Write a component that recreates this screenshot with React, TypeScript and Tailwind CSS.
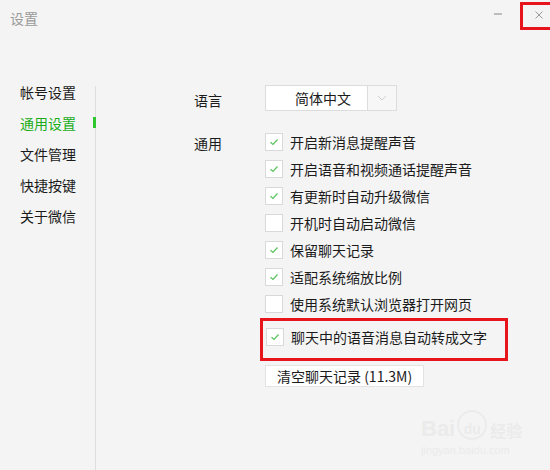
import React from 'react';

const font = { fontFamily: '"Noto Sans CJK SC", "Microsoft YaHei", "Liberation Sans", sans-serif' };

const navItems = ['帐号设置', '通用设置', '文件管理', '快捷按键', '关于微信'];

const options: { label: string; checked: boolean }[] = [
  { label: '开启新消息提醒声音', checked: true },
  { label: '开启语音和视频通话提醒声音', checked: true },
  { label: '有更新时自动升级微信', checked: true },
  { label: '开机时自动启动微信', checked: false },
  { label: '保留聊天记录', checked: true },
  { label: '适配系统缩放比例', checked: true },
  { label: '使用系统默认浏览器打开网页', checked: false },
];

function Checkbox({ checked }: { checked: boolean }) {
  return (
    <div className="w-[18px] h-[18px] border border-[#d9d9d9] bg-white flex items-center justify-center shrink-0">
      {checked && (
        <svg width="12" height="12" viewBox="0 0 12 12">
          <path d="M2.5 6.2 L5 8.5 L9.5 3.5" fill="none" stroke="#5ac25c" strokeWidth="1.2" />
        </svg>
      )}
    </div>
  );
}

export default function App() {
  return (
    <div className="relative w-[550px] h-[470px] bg-[#f4f4f4] overflow-hidden text-[#1b1b1b]" style={font}>
      {/* title bar */}
      <div className="flex items-start h-[77px]">
        <div className="ml-[10px] mt-[9px] text-[14px] leading-[18px] text-[#9a9a9a]">设置</div>
        <div className="ml-auto mt-[13px] mr-[18px] w-[8px] h-[2px] bg-[#bdbdbd]" />
        <div className="mt-[2px] w-[30px] h-[28px] border-[3px] border-r-0 border-[#e8141c] flex items-center justify-center pl-[4px] pb-[3px]">
          <svg width="8" height="8" viewBox="0 0 8 8">
            <path d="M0.5 0.5 L7.5 7.5 M7.5 0.5 L0.5 7.5" stroke="#9a9a9a" strokeWidth="1" />
          </svg>
        </div>
      </div>

      <div className="flex">
        {/* sidebar */}
        <div className="flex">
          <div className="w-[95px]">
            {navItems.map((item, i) => (
              <div
                key={item}
                className={`relative h-[31px] leading-[31px] pl-[20px] text-[14px] ${i === 1 ? 'text-[#1aad19]' : 'text-[#1b1b1b]'}`}
              >
                {item}
                {i === 1 && <div className="absolute right-[-1px] top-[9px] w-[3px] h-[11px] bg-[#2fc72f]" />}
              </div>
            ))}
          </div>
          <div className="w-px h-[384px] mt-[9px] bg-[#dedede]" />
        </div>

        {/* content */}
        <div className="pl-[98px] pt-[8px] text-[14px]">
          <div className="flex items-center">
            <div className="w-[71px] mt-[5px]">语言</div>
            <div className="flex h-[26px] w-[132px] border border-[#dcdcdc]">
              <div className="w-[101px] bg-white pl-[29px] leading-[24px]">简体中文</div>
              <div className="flex-1 border-l border-[#dcdcdc] bg-[#f7f7f7] flex items-center justify-center">
                <svg width="10" height="6" viewBox="0 0 10 6">
                  <path d="M1 1 L5 5 L9 1" fill="none" stroke="#cfcfcf" strokeWidth="1" />
                </svg>
              </div>
            </div>
          </div>

          <div className="flex mt-[17px]">
            <div className="w-[71px] leading-[27px] mt-[2px]">通用</div>
            <div>
              {options.map((o) => (
                <div key={o.label} className="flex items-center h-[27px]">
                  <Checkbox checked={o.checked} />
                  <span className="ml-[7px] leading-[18px]">{o.label}</span>
                </div>
              ))}
              <div className="-ml-[5px] mt-[1px] w-[248px] h-[43px] border-[3px] border-[#e8141c] flex items-center pl-[3px] pb-[6px]">
                <Checkbox checked />
                <span className="ml-[7px] leading-[18px]">聊天中的语音消息自动转成文字</span>
              </div>
              <div className="mt-[4px] inline-flex h-[22px] items-center px-[11px] bg-white border border-[#e3e3e3] leading-[20px]">
                清空聊天记录 (11.3M)
              </div>
            </div>
          </div>
        </div>
      </div>

      {/* watermark */}
      <div className="absolute left-[421px] top-[410px] text-[#ebebeb] select-none" style={{ fontFamily: '"Liberation Sans", "Noto Sans CJK SC", sans-serif' }}>
        <div className="flex items-end leading-none">
          <span className="text-[22px] font-bold">Bai</span>
          <span className="ml-[2px] w-[30px] h-[30px] rounded-full border-2 border-[#ebebeb] flex items-end justify-center text-[14px] font-bold pb-[2px]">du</span>
          <span className="ml-[3px] text-[16px] font-bold">经验</span>
        </div>
        <div className="text-[11px] leading-[14px] mt-[3px]">jingyan.baidu.com</div>
      </div>
    </div>
  );
}
